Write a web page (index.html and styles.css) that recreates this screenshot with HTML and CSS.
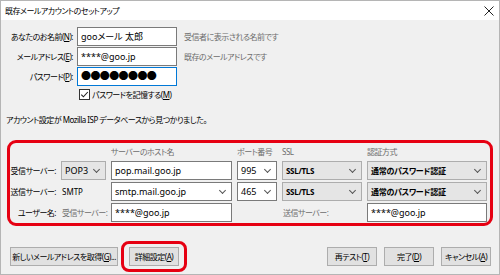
FILE: index.html
```html
<!DOCTYPE html>
<html lang="ja">
<head>
  <meta charset="UTF-8">
  <title>既存メールアカウントのセットアップ</title>
  <link rel="stylesheet" href="styles.css">
</head>
<body>
  <div class="window">
    <div class="titlebar">
      <span class="title">既存メールアカウントのセットアップ</span>
      <svg class="close" width="10" height="10" viewBox="0 0 10 10">
        <path d="M0.5 0.5 L9.5 9.5 M9.5 0.5 L0.5 9.5" stroke="#222" stroke-width="1"/>
      </svg>
    </div>

    <div class="content">
      <div class="account-form">
        <label class="field-label">あなたのお名前(<u>N</u>):</label>
        <div class="textbox">gooメール 太郎</div>
        <span class="hint">受信者に表示される名前です</span>

        <label class="field-label">メールアドレス(<u>E</u>):</label>
        <div class="textbox">****@goo.jp</div>
        <span class="hint">既存のメールアドレスです</span>

        <label class="field-label">パスワード(<u>P</u>):</label>
        <div class="textbox focused"><span class="dots">●●●●●●●●</span></div>
        <span></span>

        <span></span>
        <div class="remember">
          <svg width="11" height="11" viewBox="0 0 11 11">
            <rect x="0.5" y="0.5" width="10" height="10" fill="#fff" stroke="#333"/>
            <path d="M2.3 5.6 L4.4 7.8 L8.8 3" fill="none" stroke="#222" stroke-width="1.1"/>
          </svg>
          <span>パスワードを記憶する(<u>M</u>)</span>
        </div>
      </div>

      <p class="status">アカウント設定が Mozilla ISP データベースから見つかりました。</p>

      <div class="servers">
        <span></span>
        <span></span>
        <span class="col-head">サーバーのホスト名</span>
        <span class="col-head">ポート番号</span>
        <span class="col-head">SSL</span>
        <span class="col-head">認証方式</span>

        <span class="row-label">受信サーバー:</span>
        <div class="dropdown gray">POP3<span class="chevron"></span></div>
        <div class="textbox">pop.mail.goo.jp</div>
        <div class="dropdown">995<span class="chevron"></span></div>
        <div class="dropdown gray bold">SSL/TLS<span class="chevron"></span></div>
        <div class="dropdown gray bold">通常のパスワード認証<span class="chevron"></span></div>

        <span class="row-label">送信サーバー:</span>
        <span class="plain">SMTP</span>
        <div class="dropdown">smtp.mail.goo.jp<span class="chevron"></span></div>
        <div class="dropdown">465<span class="chevron"></span></div>
        <div class="dropdown gray bold">SSL/TLS<span class="chevron"></span></div>
        <div class="dropdown gray bold">通常のパスワード認証<span class="chevron"></span></div>

        <span class="row-label">ユーザー名:</span>
        <span class="muted">受信サーバー:</span>
        <div class="textbox">****@goo.jp</div>
        <span></span>
        <span class="muted">送信サーバー:</span>
        <div class="textbox">****@goo.jp</div>
      </div>

      <div class="actions">
        <button class="btn wide">新しいメールアドレスを取得(<u>G</u>)...</button>
        <span class="highlight"><button class="btn">詳細設定(<u>A</u>)</button></span>
        <span class="spacer"></span>
        <button class="btn fixed">再テスト(<u>T</u>)</button>
        <button class="btn fixed">完了(<u>D</u>)</button>
        <button class="btn fixed">キャンセル(<u>A</u>)</button>
      </div>
    </div>
  </div>
</body>
</html>
```

FILE: styles.css
```css
body {
  margin: 0;
  font-family: "Noto Sans", "Noto Sans CJK JP", sans-serif;
  font-feature-settings: "palt";
  font-size: 8px;
  letter-spacing: -0.5px;
  color: #000;
}

.window {
  width: 500px;
  height: 275px;
  box-sizing: border-box;
  border: 1px solid #b5b5b5;
  background-color: #f0f0f0;
  overflow: hidden;
}

.titlebar {
  height: 19px;
  background-color: #fff;
  display: flex;
  align-items: center;
  justify-content: space-between;
  padding: 0 5px 0 4px;
}

.content {
  padding: 7px 0 0 0;
}

.account-form {
  display: grid;
  grid-template-columns: 68px 100px auto;
  grid-template-rows: 19px 19px 19px 14px;
  column-gap: 4px;
  row-gap: 1px;
  padding-left: 4px;
  align-items: center;
}

.field-label {
  text-align: right;
  white-space: nowrap;
}

.hint {
  color: #6d6d6d;
  margin-left: 3px;
  white-space: nowrap;
}

.textbox {
  height: 19px;
  box-sizing: border-box;
  border: 1px solid #7a7a7a;
  background-color: #fff;
  font-size: 9px;
  letter-spacing: 0;
  line-height: 17px;
  padding: 0 3px;
  white-space: nowrap;
  overflow: hidden;
}

.textbox.focused {
  border-color: #0078d7;
}

.dots {
  font-size: 10px;
  letter-spacing: -0.6px;
}

.remember {
  grid-column: 2 / 4;
  display: flex;
  align-items: center;
  gap: 2px;
  padding-left: 2px;
  white-space: nowrap;
}

.status {
  margin: 13px 0 0 5px;
}

.servers {
  margin: 15px 6px 0 6px;
  border: 3px solid #e60012;
  border-radius: 9px;
  padding: 0 3px 1px 0;
  display: grid;
  grid-template-columns: 46px 45px 121px 40px 80px 120px;
  grid-template-rows: 16px repeat(3, 19px);
  column-gap: 5px;
  row-gap: 2px;
  align-items: center;
}

.col-head {
  color: #6d6d6d;
  white-space: nowrap;
}

.row-label {
  text-align: right;
  white-space: nowrap;
}

.plain {
  padding-left: 1px;
  letter-spacing: 0;
}

.muted {
  color: #6d6d6d;
  white-space: nowrap;
  padding-left: 1px;
}

.dropdown {
  height: 19px;
  box-sizing: border-box;
  border: 1px solid #7a7a7a;
  background-color: #fff;
  font-size: 9px;
  letter-spacing: 0;
  line-height: 17px;
  padding: 0 3px;
  display: flex;
  justify-content: space-between;
  align-items: center;
  white-space: nowrap;
}

.dropdown.gray {
  background-color: #e5e5e5;
  border-color: #adadad;
}

.dropdown.bold {
  font-weight: bold;
  font-size: 8px;
  letter-spacing: -0.3px;
}

.chevron {
  width: 4px;
  height: 4px;
  border-right: 1px solid #555;
  border-bottom: 1px solid #555;
  transform: rotate(45deg);
  margin: 0 3px 3px 0;
}

.actions {
  display: flex;
  align-items: center;
  margin: 15px 0 0 9px;
  padding-right: 8px;
}

.btn {
  height: 19px;
  box-sizing: border-box;
  border: 1px solid #adadad;
  background-color: #e1e1e1;
  font-family: inherit;
  font-feature-settings: "palt";
  font-size: 8px;
  letter-spacing: -0.5px;
  padding: 0 4px;
  line-height: 17px;
  color: #000;
  margin: 0;
  white-space: nowrap;
}

.btn.wide {
  width: 108px;
  padding: 0;
}

.highlight {
  margin-left: 3px;
  border: 3px solid #e60012;
  border-radius: 8px;
  padding: 3px 5px;
  display: flex;
}

.highlight .btn {
  width: 50px;
}

.spacer {
  flex: 1;
}

.fixed {
  width: 50px;
  padding: 0;
}

.fixed + .fixed {
  margin-left: 7px;
}
```
